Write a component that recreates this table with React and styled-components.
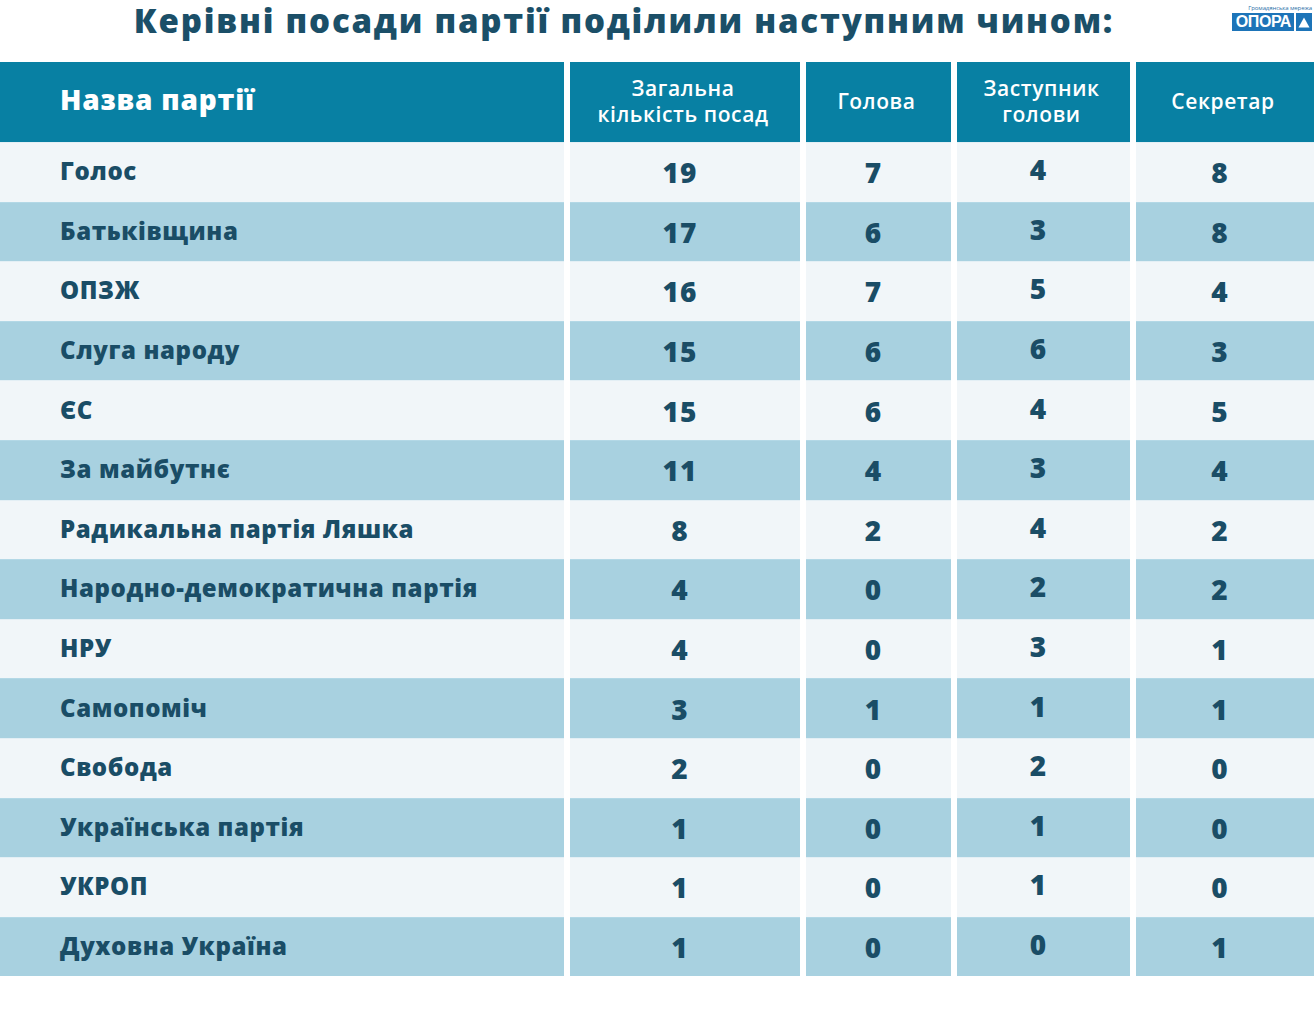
import React from "react";
import styled, { createGlobalStyle } from "styled-components";

const rows = [
  ["Голос", 19, 7, 4, 8],
  ["Батьківщина", 17, 6, 3, 8],
  ["ОПЗЖ", 16, 7, 5, 4],
  ["Слуга народу", 15, 6, 6, 3],
  ["ЄС", 15, 6, 4, 5],
  ["За майбутнє", 11, 4, 3, 4],
  ["Радикальна партія Ляшка", 8, 2, 4, 2],
  ["Народно-демократична партія", 4, 0, 2, 2],
  ["НРУ", 4, 0, 3, 1],
  ["Самопоміч", 3, 1, 1, 1],
  ["Свобода", 2, 0, 2, 0],
  ["Українська партія", 1, 0, 1, 0],
  ["УКРОП", 1, 0, 1, 0],
  ["Духовна Україна", 1, 0, 0, 1],
];

const App = () => {
  return (
    <>
      <GlobalStyle />
      <Page>
        <TitleBar>
          <Title>Керівні посади партії поділили наступним чином:</Title>
          <Logo>
            <LogoCaption>Громадянська мережа</LogoCaption>
            <LogoRow>
              <LogoWord>ОПОРА</LogoWord>
              <LogoMark>
                <svg width="12" height="11" viewBox="0 0 12 11">
                  <polygon points="6,0.5 11.5,10.5 0.5,10.5" fill="#fff" />
                </svg>
              </LogoMark>
            </LogoRow>
          </Logo>
        </TitleBar>

        <Table>
          <HeadCell $first>Назва партії</HeadCell>
          <HeadCell>Загальна<br />кількість посад</HeadCell>
          <HeadCell>Голова</HeadCell>
          <HeadCell>Заступник<br />голови</HeadCell>
          <HeadCell>Секретар</HeadCell>

          {rows.map(([name, total, head, deputy, secretary], index) => {
            const dark = index % 2 === 1;
            return (
              <React.Fragment key={name}>
                <NameCell $dark={dark}>{name}</NameCell>
                <NumCell $dark={dark}>{total}</NumCell>
                <NumCell $dark={dark}>{head}</NumCell>
                <NumCell $dark={dark} $raised>{deputy}</NumCell>
                <NumCell $dark={dark}>{secretary}</NumCell>
              </React.Fragment>
            );
          })}
        </Table>
      </Page>
    </>
  );
};

export default App;


const GlobalStyle = createGlobalStyle`
  body {
    margin: 0;
    background: #ffffff;
    font-family: "Open Sans", "Noto Sans", sans-serif;
  }
`;

const Page = styled.div`
  width: 1314px;
  height: 1025px;
  background: #ffffff;
`;

const TitleBar = styled.div`
  position: relative;
  height: 62px;
  display: flex;
  justify-content: center;
`;

const Title = styled.h1`
  margin: 0 0 0 -66px;
  font-size: 33px;
  line-height: 42px;
  font-weight: 800;
  color: #1b4f68;
  letter-spacing: 1.8px;
`;

const Logo = styled.div`
  position: absolute;
  right: 2px;
  top: 5px;
  display: flex;
  flex-direction: column;
  align-items: flex-end;
`;

const LogoCaption = styled.span`
  font-size: 6px;
  line-height: 7px;
  color: #2b6fa8;
  letter-spacing: -0.1px;
`;

const LogoRow = styled.div`
  display: flex;
  gap: 2px;
  margin-top: 1px;
`;

const LogoWord = styled.span`
  background: #1d74b8;
  color: #ffffff;
  font-family: "Liberation Sans", Arial, sans-serif;
  font-weight: 700;
  font-size: 16px;
  line-height: 18px;
  padding: 0 3px 0 4px;
  letter-spacing: -0.4px;
`;

const LogoMark = styled.span`
  width: 16px;
  height: 18px;
  background: #1d74b8;
  display: flex;
  align-items: center;
  justify-content: center;
`;

const Table = styled.div`
  display: grid;
  grid-template-columns: 564px 230px 145px 173px 178px;
  grid-template-rows: 80px repeat(14, 59.6px);
  column-gap: 6px;
`;

const HeadCell = styled.div`
  background: #0880a3;
  color: #ffffff;
  display: flex;
  align-items: center;
  justify-content: ${(p) => (p.$first ? "flex-start" : "center")};
  text-align: center;
  padding-left: ${(p) => (p.$first ? "60px" : "0")};
  padding-right: ${(p) => (p.$first ? "0" : "4px")};
  padding-bottom: ${(p) => (p.$first ? "6px" : "3px")};
  font-size: ${(p) => (p.$first ? "28px" : "21px")};
  font-weight: ${(p) => (p.$first ? 800 : 600)};
  letter-spacing: ${(p) => (p.$first ? "0.8px" : "0.6px")};
  line-height: 26px;
`;

const BodyCell = styled.div`
  background: ${(p) => (p.$dark ? "#a8d1e0" : "#f1f6f9")};
  border-top: 1px solid ${(p) => (p.$dark ? "#b3d8e6" : "#e3eff5")};
  color: #1a4d66;
  display: flex;
  align-items: center;
  font-weight: 800;
`;

const NameCell = styled(BodyCell)`
  padding-left: 60px;
  padding-bottom: 3px;
  font-size: 24px;
  letter-spacing: 0.6px;
`;

const NumCell = styled(BodyCell)`
  justify-content: center;
  padding-right: 10px;
  font-size: 28px;
  letter-spacing: 1px;
  padding-bottom: ${(p) => (p.$raised ? "6px" : "0")};
`;
